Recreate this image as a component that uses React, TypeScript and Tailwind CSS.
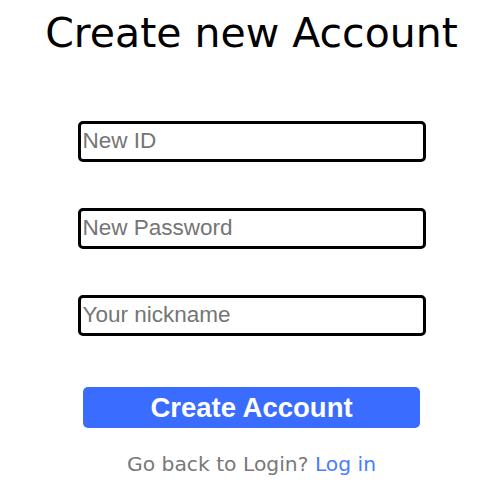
export default function App() {
  return (
    <div className="w-[497px] h-[491px] bg-white pl-[6px] flex flex-col items-center font-['DejaVu_Sans',sans-serif]">
      <h1 className="mt-[10px] text-[41px] leading-[47px] font-normal text-black">
        Create new Account
      </h1>
      <div className="mt-[64px] flex flex-col gap-[46px]">
        {["New ID", "New Password", "Your nickname"].map((p) => (
          <input
            key={p}
            type={p === "New Password" ? "password" : "text"}
            placeholder={p}
            className="box-border w-[348px] h-[41px] border-[3px] border-black rounded-[5px] px-[2px] pb-[2px] text-[22.5px] text-black placeholder:text-[#757575] outline-none font-['Liberation_Sans',Arial,sans-serif]"
          />
        ))}
      </div>
      <button className="mt-[51px] w-[337px] h-[41px] rounded-[5px] bg-[#3a6cff] text-white font-bold text-[27.5px] leading-none flex items-center justify-center font-['Liberation_Sans',Arial,sans-serif]">
        Create Account
      </button>
      <p className="mt-[25px] text-[20.3px] leading-[23px] text-[#787878]">
        Go back to Login? <a className="text-[#4a7cff]">Log in</a>
      </p>
    </div>
  );
}
